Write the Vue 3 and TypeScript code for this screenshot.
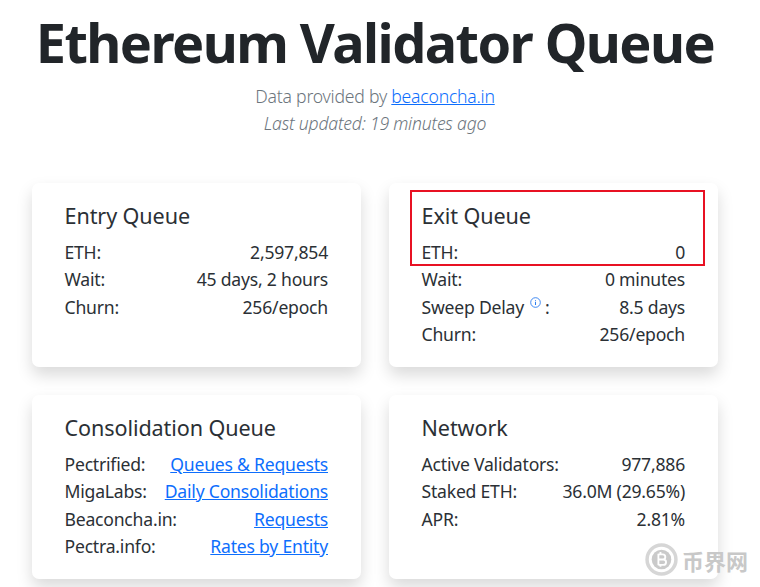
<script setup lang="ts">
interface Row { label: string; value: string; href?: boolean; info?: boolean }
interface Card { title: string; rows: Row[] }
const cards: Card[] = [
  { title: 'Entry Queue', rows: [
    { label: 'ETH:', value: '2,597,854' },
    { label: 'Wait:', value: '45 days, 2 hours' },
    { label: 'Churn:', value: '256/epoch' },
  ] },
  { title: 'Exit Queue', rows: [
    { label: 'ETH:', value: '0' },
    { label: 'Wait:', value: '0 minutes' },
    { label: 'Sweep Delay', value: '8.5 days', info: true },
    { label: 'Churn:', value: '256/epoch' },
  ] },
  { title: 'Consolidation Queue', rows: [
    { label: 'Pectrified:', value: 'Queues & Requests', href: true },
    { label: 'MigaLabs:', value: 'Daily Consolidations', href: true },
    { label: 'Beaconcha.in:', value: 'Requests', href: true },
    { label: 'Pectra.info:', value: 'Rates by Entity', href: true },
  ] },
  { title: 'Network', rows: [
    { label: 'Active Validators:', value: '977,886' },
    { label: 'Staked ETH:', value: '36.0M (29.65%)' },
    { label: 'APR:', value: '2.81%' },
  ] },
]
</script>

<template>
  <div class="page">
    <header class="head">
      <h1>Ethereum Validator Queue</h1>
      <p class="lead">Data provided by <a href="#">beaconcha.in</a></p>
      <p class="updated">Last updated: 19 minutes ago</p>
    </header>
    <section class="grid">
      <article v-for="c in cards" :key="c.title" class="card">
        <h2>{{ c.title }}</h2>
        <div v-for="r in c.rows" :key="r.label" class="row">
          <span class="label">{{ r.label }}<template v-if="r.info"><svg class="info" viewBox="0 0 16 16" width="11" height="11" fill="none" stroke="#2b7cf0"><circle cx="8" cy="8" r="7" stroke-width="1.3"/><path d="M8 7v4.5M8 4.2v1.3" stroke-width="1.5"/></svg><span class="colon">:</span></template></span>
          <a v-if="r.href" href="#">{{ r.value }}</a>
          <span v-else>{{ r.value }}</span>
        </div>
      </article>
    </section>
    <div class="mark"></div>
    <div class="wm">
      <svg viewBox="0 0 32 32" width="33" height="33" fill="none">
        <circle cx="16" cy="16" r="14" stroke="#d6d6d6" stroke-width="3.4"/>
        <circle cx="16" cy="16" r="9.5" fill="#cacaca"/>
        <path d="M13 10.5v11M13 11h4.2a2.4 2.4 0 0 1 0 5H13M13 16h4.8a2.6 2.6 0 0 1 0 5.2H13M15 8.8v2M15 21v2" stroke="#fff" stroke-width="1.8"/>
      </svg>
      <span>币界网</span>
    </div>
  </div>
</template>

<style scoped>
.page {
  position: relative;
  width: 760px;
  height: 587px;
  overflow: hidden;
  box-sizing: border-box;
  padding: 0 42px 0 32px;
  background: #fff;
  color: #2b3035;
  font-family: "Noto Sans", "Open Sans", sans-serif;
  font-size: 17.6px;
  letter-spacing: -0.22px;
}
.head { text-align: center; }
h1 {
  margin: 0;
  padding-top: 8px;
  font-size: 54px;
  line-height: 68px;
  font-weight: 700;
  letter-spacing: -1.56px;
  white-space: nowrap;
  color: #212529;
}
.lead, .updated {
  margin: 0;
  color: #6c757d;
  font-weight: 300;
  line-height: 27.5px;
}
.lead { margin-top: 7px; }
.updated { font-style: italic; margin-top: -0.5px; }
a { color: #0d6efd; text-decoration: underline; }
.grid {
  display: grid;
  grid-template-columns: 329px 329px;
  gap: 28px;
  margin-top: 45.5px;
}
.card {
  box-sizing: border-box;
  height: 184px;
  padding: 19px 33px 19px 32.5px;
  background: #fff;
  border-radius: 7px;
  box-shadow: 0 8px 16px rgba(0, 0, 0, 0.15);
}
h2 {
  margin: 0 0 8.5px;
  font-size: 21.6px;
  line-height: 28px;
  font-weight: 400;
  letter-spacing: -0.1px;
}
.row {
  display: flex;
  justify-content: space-between;
  line-height: 27.5px;
  white-space: nowrap;
}
.info { vertical-align: 6px; margin-left: 6px; }
.colon { margin-left: 4px; }
.mark {
  position: absolute;
  left: 410px;
  top: 190px;
  width: 295px;
  height: 76px;
  box-sizing: border-box;
  border: 2px solid #e81123;
}
.wm {
  position: absolute;
  left: 645px;
  top: 543px;
  display: flex;
  align-items: center;
  gap: 4px;
  color: #c8c8c8;
  font-family: "Noto Sans CJK SC", sans-serif;
  font-weight: 700;
  font-size: 22px;
  line-height: 32px;
  letter-spacing: 0;
}
</style>
